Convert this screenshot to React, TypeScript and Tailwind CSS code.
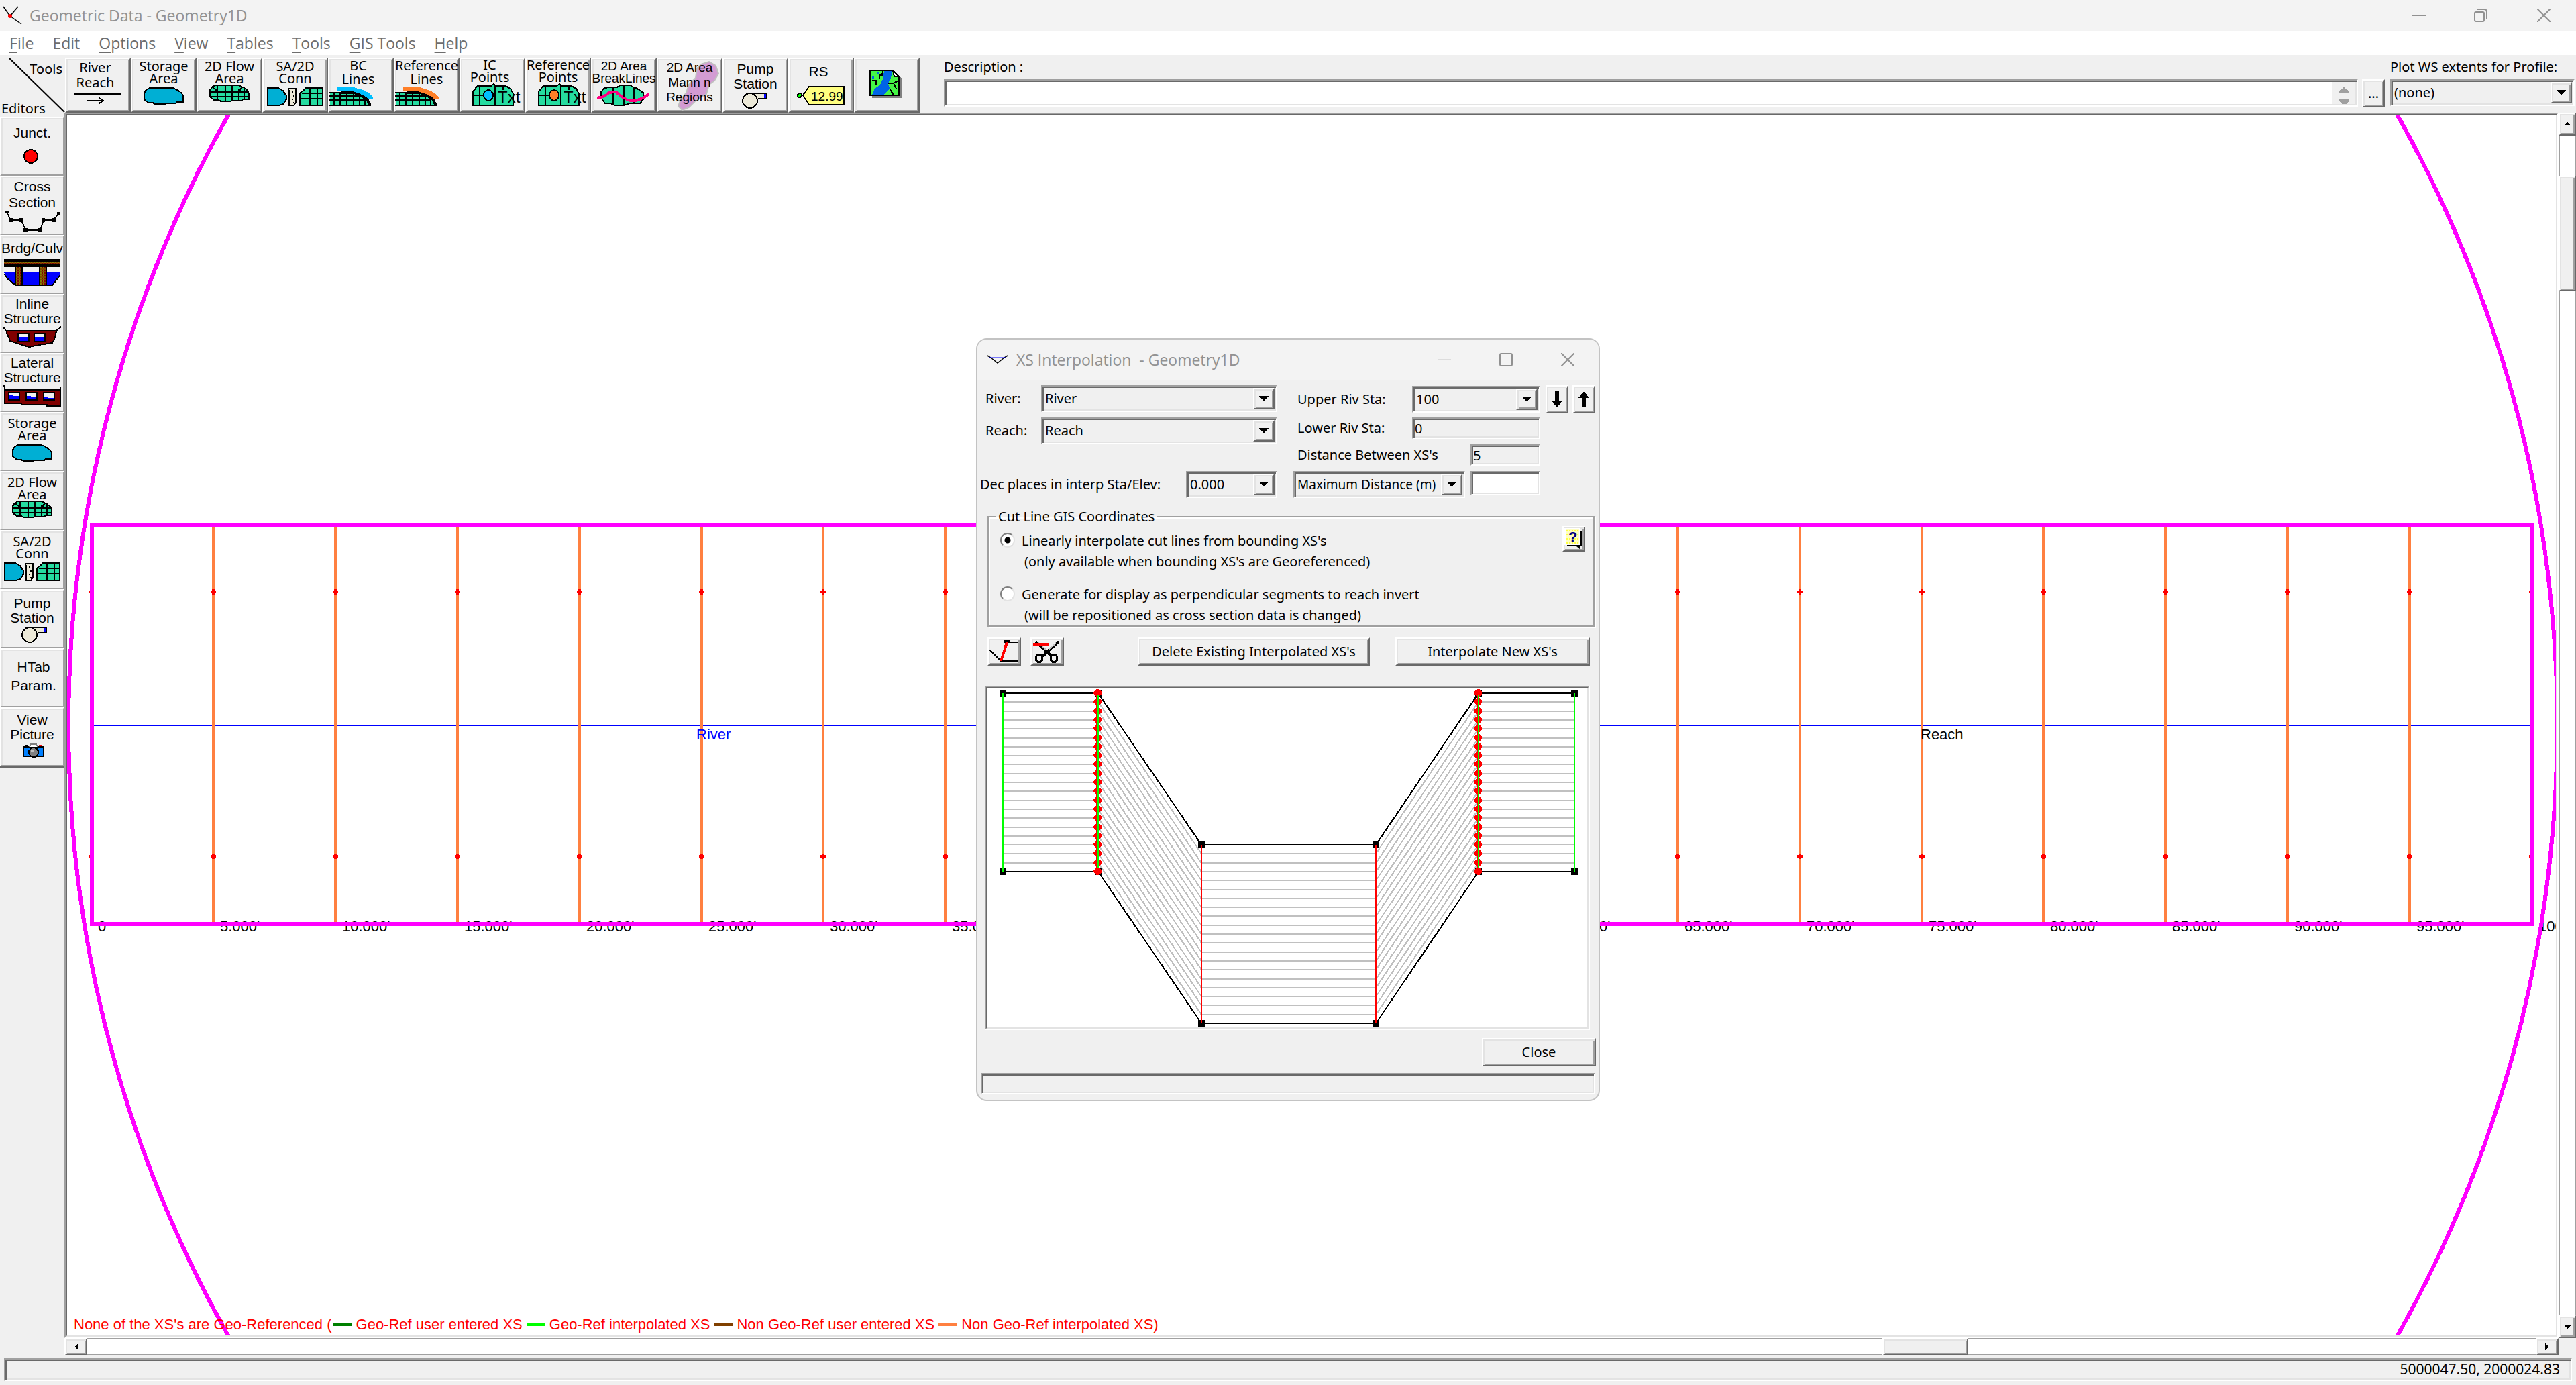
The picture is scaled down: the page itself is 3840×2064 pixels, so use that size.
import React from "react";
import { clsx } from "clsx";

const RAISED =
  "border-2 border-t-white border-l-white border-r-[#696969] border-b-[#696969] bg-[#f0f0f0] shadow-[inset_2px_2px_0_#e3e3e3,inset_-2px_-2px_0_#a0a0a0]";
const SUNKEN =
  "border-2 border-t-[#a0a0a0] border-l-[#a0a0a0] border-r-white border-b-white shadow-[inset_2px_2px_0_#696969,inset_-2px_-2px_0_#e3e3e3]";
const SUNKEN_OUTER = "border-2 border-t-[#a0a0a0] border-l-[#a0a0a0] border-r-white border-b-white";
const SUNKEN_INNER = "border-2 border-t-[#696969] border-l-[#696969] border-r-[#e3e3e3] border-b-[#e3e3e3]";

const NOTO = "font-['Noto_Sans',sans-serif]";
const TAHOMA = "font-['Noto_Sans',sans-serif] text-[20px]";
const SANS = "font-['Liberation_Sans',sans-serif] text-[21px]";

const MESH = "#25dca0";
const WATER = "#00afd4";

type IconProps = { w: number; h: number; className?: string; children: React.ReactNode };
function Icon({ w, h, className, children }: IconProps) {
  return (
    <svg width={w} height={h} viewBox={`0 0 ${w} ${h}`} shapeRendering="crispEdges" className={clsx("block shrink-0", className)} aria-hidden="true">
      {children}
    </svg>
  );
}

const BLOB = "M9 1H44L52 5L57 9L59 13V22L50 22L48 24H34L31 25H17L14 23H7L1 18V8L5 3Z";

const StorageIcon = () => (
  <Icon w={60} h={27}>
    <path d={BLOB} fill={WATER} stroke="#000" strokeWidth="2" />
  </Icon>
);

const FlowAreaIcon = () => (
  <Icon w={60} h={27}>
    <path d={BLOB} fill={MESH} stroke="#000" strokeWidth="2" />
    <path d="M12 2V24M24 1V25M34 1V25M44 6V24M52 6V22M1 11H59M1 18H59M5 4L12 10M50 3L43 11" fill="none" stroke="#000" strokeWidth="2" />
  </Icon>
);

const ConnIcon = () => (
  <Icon w={84} h={28}>
    <path d="M1 1H17L24 5L29 13V18L24 25L19 27H1Z" fill={WATER} stroke="#000" strokeWidth="2" />
    <path d="M32 4V2H43V22L40 27H33V5Z" fill="#ece9d8" stroke="#000" strokeWidth="2" />
    <path d="M37 6h2v2h-2zM39 12h2v2h-2zM37 17h2v2h-2zM39 22h2v2h-2z" fill="#000" />
    <path d="M58 1H83V27H49V9Z" fill={MESH} stroke="#000" strokeWidth="2" />
    <path d="M64 1V27M75 1V27M52 9H83M49 17H83" stroke="#000" strokeWidth="2" />
  </Icon>
);

const LinesIcon = ({ color }: { color: string }) => (
  <Icon w={66} h={28}>
    <path d="M1 7H38L48 11L56 17L61 27H1Z" fill={MESH} />
    <path d="M0 8H20M0 13H44M0 19H54M0 27H62M7 7V27M16 9V27M26 9V27M36 9V27M45 12V27M53 16V27" stroke="#000" strokeWidth="2" fill="none" />
    <path d="M18 8H37L47 12L56 18L61 27" stroke="#000" strokeWidth="4" fill="none" />
    <path d="M12 0H36L50 4L60 9L65 15V18H58L54 14L44 9L34 6H12Z" fill={color} />
  </Icon>
);

const PointsIcon = ({ color }: { color: string }) => (
  <Icon w={76} h={34}>
    <path d="M1 33V12L8 4H28L32 1L36 4H50L57 8L61 16V33Z" fill={MESH} stroke="#000" strokeWidth="2" />
    <path d="M11 4V33M34 2V33M1 18H16M46 4V10" stroke="#000" strokeWidth="2" />
    <ellipse cx="24" cy="18" rx="7" ry="8" fill={color} stroke="#000" strokeWidth="2" />
    <text x="38" y="29" fontSize="24" className="font-['Liberation_Sans',sans-serif]">Txt</text>
  </Icon>
);

const BreakIcon = () => (
  <Icon w={80} h={32}>
    <path d="M16 4H30L34 1H50L54 4L60 6L69 12V22L64 28H48L40 31H26L20 28H12L6 20V11L10 6Z" fill={MESH} stroke="#000" strokeWidth="2" />
    <path d="M24 4V29M40 2V30M55 5V28" stroke="#000" strokeWidth="2" />
    <path d="M0 20L10 18L18 12L28 11L38 19L48 24H58L68 20L78 14" stroke="#ff0080" strokeWidth="4" fill="none" />
  </Icon>
);

const PumpIcon = () => (
  <Icon w={40} h={24}>
    <path d="M12 1H37V9H24" fill="#ece9d8" stroke="#000" strokeWidth="2" />
    <rect x="33" y="2" width="3" height="6" fill="#0000ff" />
    <circle cx="12" cy="12" r="11" fill="#ece9d8" stroke="#000" strokeWidth="2" />
  </Icon>
);

const RiverReachIcon = () => (
  <Icon w={70} h={20}>
    <rect x="0" y="2" width="70" height="4" />
    <path d="M18 14H44M36 9L42 14L36 19" stroke="#000" strokeWidth="2" fill="none" />
  </Icon>
);

const TagIcon = () => (
  <Icon w={72} h={30}>
    <path d="M9 14L18 1H70V28H18Z" fill="#ffff80" stroke="#000" strokeWidth="2" />
    <circle cx="4" cy="14" r="3" fill="#00ff00" stroke="#000" strokeWidth="2" />
    <text x="21" y="22" fontSize="19" className="font-['Liberation_Sans',sans-serif]">12.99</text>
  </Icon>
);

const MapIcon = () => (
  <Icon w={48} h={42}>
    <path d="M4 4H36L48 12V42H4Z" fill="#808080" />
    <path d="M1 1H35L44 10V38H1Z" fill="#45f545" stroke="#000" strokeWidth="2" />
    <path d="M22 2H34L32 12L28 20L30 28L22 37H4L8 28L16 22L20 14Z" fill="#0064e6" />
    <path d="M35 1L44 10H37Z" fill="#fff" stroke="#000" strokeWidth="2" />
    <path d="M20 2L19 8H15V14M28 20H36L43 16M36 20L40 28M30 28L36 37M4 16H10V22" fill="none" stroke="#000" strokeWidth="2" />
    <path d="M12 4h3v3h-3zM4 10h3v3h-3z" fill="#0064e6" />
  </Icon>
);

const JunctionIcon = () => (
  <Icon w={22} h={22}>
    <circle cx="11" cy="11" r="10" fill="#f00" stroke="#000" strokeWidth="2" />
  </Icon>
);

const CrossSectionIcon = () => (
  <Icon w={82} h={32}>
    <path d="M3 2L9 14H25L31 29H53L58 14H73L80 4" fill="none" stroke="#000" strokeWidth="2" />
    <path d="M0 0h6v4H0zM6 11h6v6H6zM22 11h6v6h-6zM28 26h6v6h-6zM50 26h6v6h-6zM55 11h5v6h-5zM70 11h6v6h-6zM78 2h4v4h-4z" />
  </Icon>
);

const BridgeIcon = () => (
  <Icon w={84} h={40}>
    <path d="M0 20H84V24L72 38H17L4 28Z" fill="#0000ff" />
    <path d="M0 22L6 30L17 39H72L84 24" fill="none" stroke="#000" strokeWidth="2" />
    <rect x="0" y="0" width="84" height="12" />
    <rect x="0" y="4" width="84" height="4" fill="#804000" />
    <rect x="16" y="12" width="12" height="26" />
    <rect x="18" y="12" width="8" height="26" fill="#804a00" />
    <rect x="52" y="12" width="12" height="26" />
    <rect x="54" y="12" width="8" height="26" fill="#804a00" />
    <path d="M0 5H84M19 12V38M23 12V38M55 12V38M59 12V38" stroke="#808000" strokeWidth="2" strokeDasharray="2 2" />
    <path d="M0 7H84M21 12V38M25 12V38M57 12V38M61 12V38" stroke="#800000" strokeWidth="2" strokeDasharray="2 2" />
  </Icon>
);

const InlineIcon = () => (
  <Icon w={88} h={32}>
    <path d="M1 1L5 7H80L87 1" fill="none" stroke="#000" strokeWidth="2" />
    <path d="M5 7H80L78 17L74 25L54 28L40 31L22 26L11 22Z" fill="#800000" stroke="#000" strokeWidth="2" />
    <path d="M23 11H39V23H23ZM47 11H63V23H47Z" fill="#f0f0f0" stroke="#000" strokeWidth="2" />
    <path d="M24 16H38V22H24ZM48 16H62V22H48Z" fill="#0000ff" />
  </Icon>
);

const LateralIcon = () => (
  <Icon w={88} h={32}>
    <path d="M0 1H3V7M86 2V8" fill="none" stroke="#000" strokeWidth="2" />
    <path d="M3 7H86V31H66V29H28V27H3Z" fill="#800000" stroke="#000" strokeWidth="2" />
    <path d="M9 11H25V22H9ZM35 11H51V22H35ZM61 11H77V22H61Z" fill="#f0f0f0" stroke="#000" strokeWidth="2" />
    <path d="M10 14H16V16H24V21H10ZM36 16H42V18H50V21H36ZM62 17H68V19H76V21H62Z" fill="#0000ff" />
  </Icon>
);

const CameraIcon = () => (
  <Icon w={32} h={22}>
    <rect x="1" y="5" width="30" height="14" fill="#0080ff" stroke="#000" strokeWidth="2" />
    <path d="M10 5L12 1H20L22 5" fill="#fff" stroke="#808080" strokeWidth="2" />
    <rect x="4" y="2" width="4" height="2" />
    <rect x="24" y="2" width="4" height="2" fill="#f00" />
    <circle cx="16" cy="13" r="7" fill="#808080" stroke="#000" strokeWidth="2" />
    <rect x="12" y="9" width="4" height="4" fill="#c0c0c0" />
  </Icon>
);

type Tool = { lines: string[]; text: string; icon?: React.ReactNode; gap?: string };

const tools: Tool[] = [
  { lines: ["River", "Reach"], text: clsx(TAHOMA, "pt-0.5 pr-2 leading-[22px]"), icon: <RiverReachIcon />, gap: "mt-0.5" },
  { lines: ["Storage", "Area"], text: clsx(TAHOMA, "pt-0.5 leading-[18px]"), icon: <StorageIcon />, gap: "mt-1" },
  { lines: ["2D Flow", "Area"], text: clsx(TAHOMA, "pt-0.5 leading-[18px]"), icon: <FlowAreaIcon /> },
  { lines: ["SA/2D", "Conn"], text: clsx(TAHOMA, "pt-0.5 leading-[18px]"), icon: <ConnIcon />, gap: "mt-1" },
  { lines: ["BC", "Lines"], text: clsx(TAHOMA, "pr-2 leading-[20px]"), icon: <LinesIcon color="#00bfff" />, gap: "mt-0.5 -ml-7" },
  { lines: ["Reference", "Lines"], text: clsx(TAHOMA, "leading-[20px]"), icon: <LinesIcon color="#ff7f27" />, gap: "mt-0.5 -ml-7" },
  { lines: ["IC", "Points"], text: clsx(TAHOMA, "pr-2 leading-[18px]"), icon: <PointsIcon color="#00bfff" />, gap: "ml-4" },
  { lines: ["Reference", "Points"], text: clsx(TAHOMA, "leading-[18px]"), icon: <PointsIcon color="#ff7f27" />, gap: "ml-4" },
  { lines: ["2D Area", "BreakLines"], text: "font-['Liberation_Sans',sans-serif] text-[19px] pt-0.5 leading-[18px]", icon: <BreakIcon /> },
  { lines: ["2D Area", "Mann n", "Regions"], text: "font-['Liberation_Sans',sans-serif] text-[19px] pt-0.5 leading-[22px] relative" },
  { lines: ["Pump", "Station"], text: clsx(SANS, "pt-1 leading-[22px]"), icon: <PumpIcon />, gap: "mt-0.5" },
  { lines: ["RS"], text: clsx(SANS, "pt-2 pr-2 leading-[22px]"), icon: <TagIcon />, gap: "mt-2.5" },
  { lines: [], text: "pt-4", icon: <MapIcon />, gap: "pr-1" },
];

const editors: Tool[] = [
  { lines: ["Junct."], text: clsx(SANS, "pt-2.5 leading-[24px]"), icon: <JunctionIcon />, gap: "mt-3 pr-1" },
  { lines: ["Cross", "Section"], text: clsx(SANS, "pt-0.5 leading-[24px]"), icon: <CrossSectionIcon /> },
  { lines: ["Brdg/Culv"], text: clsx(SANS, "pt-1.5 leading-[24px]"), icon: <BridgeIcon />, gap: "mt-1" },
  { lines: ["Inline", "Structure"], text: clsx(SANS, "pt-0.5 leading-[22px]"), icon: <InlineIcon /> },
  { lines: ["Lateral", "Structure"], text: clsx(SANS, "pt-0.5 leading-[22px]"), icon: <LateralIcon /> },
  { lines: ["Storage", "Area"], text: clsx(TAHOMA, "pt-1.5 leading-[18px]"), icon: <StorageIcon />, gap: "mt-1" },
  { lines: ["2D Flow", "Area"], text: clsx(TAHOMA, "pt-1.5 leading-[18px]"), icon: <FlowAreaIcon /> },
  { lines: ["SA/2D", "Conn"], text: clsx(TAHOMA, "pt-1.5 leading-[18px]"), icon: <ConnIcon />, gap: "mt-1" },
  { lines: ["Pump", "Station"], text: clsx(SANS, "pt-2 leading-[22px]"), icon: <PumpIcon />, gap: "mt-0.5 pl-2" },
  { lines: ["HTab", "Param."], text: clsx(SANS, "pt-3 pl-1 leading-[28px]") },
  { lines: ["View", "Picture"], text: clsx(SANS, "pt-1.5 leading-[22px]"), icon: <CameraIcon />, gap: "mt-0.5 pl-1" },
];

function ToolFace({ lines, text, icon, gap }: Tool) {
  return (
    <>
      <span className={clsx("block text-center whitespace-nowrap", text)}>
        {lines.map((l) => (
          <span key={l} className="block">{l}</span>
        ))}
      </span>
      {icon && <span className={clsx("block", gap)}>{icon}</span>}
    </>
  );
}

function Arrow({ className }: { className?: string }) {
  return (
    <svg width="14" height="8" viewBox="0 0 14 8" shapeRendering="crispEdges" className={className} aria-hidden="true">
      <path d="M0 0H14L7 8Z" />
    </svg>
  );
}

type ComboProps = { id?: string; value: string; className?: string; label?: string; compact?: boolean };
function Combo({ id, value, className, label, compact }: ComboProps) {
  return (
    <div className={clsx("relative h-10", className)}>
      <select
        id={id}
        aria-label={label}
        className={clsx(
          "h-full w-full appearance-none overflow-hidden bg-[#f0f0f0] pl-1 outline-none",
          NOTO,
          compact ? "pr-8 text-[19px]" : "pr-9 text-[20px]",
          SUNKEN,
        )}
      >
        <option>{value}</option>
      </select>
      <span className={clsx("pointer-events-none absolute top-1 right-1 bottom-1 flex w-8 items-center justify-center", RAISED)}>
        <Arrow />
      </span>
    </div>
  );
}

function MainTitleBar() {
  return (
    <header className="flex h-[46px] items-center bg-[#f3f3f3] pl-1 text-[#919191]">
      <svg width="30" height="28" viewBox="0 0 30 28" className="mr-2.5" aria-hidden="true">
        <path d="M1 1L11 15L23 1M11 15L28 27" fill="none" stroke="#000" strokeWidth="1.5" />
        <circle cx="11" cy="15" r="3" fill="#f00" />
      </svg>
      <h1 className="flex-1 font-['Open_Sans',sans-serif] text-[23px]">Geometric Data - Geometry1D</h1>
      <button aria-label="Minimize" className="flex w-[92px] justify-center">
        <svg width="20" height="20" viewBox="0 0 20 20"><path d="M0 10H20" stroke="#919191" strokeWidth="2" /></svg>
      </button>
      <button aria-label="Restore" className="flex w-[92px] justify-center">
        <svg width="20" height="20" viewBox="0 0 20 20" fill="none" stroke="#919191" strokeWidth="2">
          <rect x="1" y="5" width="14" height="14" rx="2" />
          <path d="M5 1H15Q19 1 19 5V15" />
        </svg>
      </button>
      <button aria-label="Close window" className="flex w-24 justify-center">
        <svg width="20" height="20" viewBox="0 0 20 20"><path d="M0 0L20 20M20 0L0 20" stroke="#919191" strokeWidth="2" /></svg>
      </button>
    </header>
  );
}

const menus: [string, boolean][] = [
  ["File", true], ["Edit", false], ["Options", true], ["View", true],
  ["Tables", true], ["Tools", true], ["GIS Tools", true], ["Help", true],
];

function MenuBar() {
  return (
    <nav className="flex h-9 items-center gap-7 bg-white pl-3.5 font-['Open_Sans',sans-serif] text-[23px] text-[#6d6d6d]">
      {menus.map(([m, u]) => (
        <button key={m} className="whitespace-nowrap">
          {u ? <span className="underline underline-offset-4">{m[0]}</span> : m[0]}
          {m.slice(1)}
        </button>
      ))}
    </nav>
  );
}

function Toolbar() {
  return (
    <div className={clsx("flex h-[86px] pt-1", TAHOMA)}>
      <div className="relative flex w-[97px] shrink-0 flex-col justify-between">
        <svg className="absolute inset-0 h-full w-full" viewBox="0 0 97 82" aria-hidden="true">
          <path d="M14 1L96 81" stroke="#000" strokeWidth="2" />
        </svg>
        <span className="relative pt-1 pr-1 text-right leading-[26px]">Tools</span>
        <span className="relative pl-0.5 leading-3">Editors</span>
      </div>
      {tools.map((t, i) => (
        <button key={i} aria-label={t.lines.join(" ") || "Background map"} className={clsx("relative flex w-[98px] shrink-0 flex-col items-center", RAISED)}>
          {t.lines[1] === "Mann n" && (
            <svg className="absolute inset-0 h-full w-full" viewBox="0 0 94 78" aria-hidden="true">
              <path d="M64 8L76 4L86 10L90 22L84 32L76 38L72 52L58 60L46 72L36 76L30 70L34 60L42 50L46 38L56 28L58 14Z" fill="#d39bd3" stroke="#c0c0c0" strokeWidth="2" />
            </svg>
          )}
          <ToolFace {...t} />
        </button>
      ))}
      <div className="ml-9 flex min-w-0 flex-1 flex-col">
        <label htmlFor="description" className="h-8 leading-7">Description :</label>
        <div className={clsx("flex h-[41px] bg-white p-0.5", SUNKEN)}>
          <input id="description" className="min-w-0 flex-1 bg-transparent px-1 outline-none" />
          <div className="flex w-[34px] flex-col items-center justify-between bg-[#f0f0f0] pt-2">
            <Icon w={16} h={8}><path d="M8 0L16 6V8H0V6Z" fill="#a0a0a0" /></Icon>
            <Icon w={16} h={8}><path d="M0 0H16V3L11 8H5L0 3Z" fill="#a0a0a0" /></Icon>
          </div>
        </div>
      </div>
      <button aria-label="Edit description" className={clsx("mr-2 ml-1.5 mt-8 h-[42px] w-[34px] leading-[30px]", RAISED)}>...</button>
      <div className="mr-0.5 flex w-[275px] shrink-0 flex-col">
        <label htmlFor="profile" className="h-8 leading-7 whitespace-nowrap">Plot WS extents for Profile:</label>
        <Combo id="profile" value="(none)" />
      </div>
    </div>
  );
}

function EditorsBar() {
  return (
    <aside className="w-24 shrink-0 pt-1.5">
      {editors.map((t) => (
        <button
          key={t.lines.join(" ")}
          className="flex h-[88px] w-full flex-col items-center overflow-hidden border-2 border-t-white border-r-[#a0a0a0] border-b-[#a0a0a0] border-l-white bg-[#f0f0f0] shadow-[inset_2px_2px_0_#e3e3e3]"
        >
          <ToolFace {...t} />
        </button>
      ))}
      <div className="h-0.5 bg-[#696969]" />
    </aside>
  );
}

const stations = Array.from({ length: 21 }, (_, i) => ({
  x: Math.round(136 + i * 181.9),
  label: i === 0 ? "0" : `${i * 5}.000'`,
}));

const legend: [string, string][] = [
  ["bg-[#008000]", "Geo-Ref user entered XS"],
  ["bg-[#00ff00]", "Geo-Ref interpolated XS"],
  ["bg-[#804000]", "Non Geo-Ref user entered XS"],
  ["bg-[#ff8040]", "Non Geo-Ref interpolated XS)"],
];

function Schematic() {
  return (
    <div className={clsx("min-h-0 flex-1", SUNKEN_OUTER)}>
      <div className={clsx("relative h-full overflow-hidden bg-white", SUNKEN_INNER)}>
        <svg className="absolute inset-0 h-full w-full" viewBox="100 172 3710 1818" preserveAspectRatio="xMidYMid slice" shapeRendering="crispEdges" role="img" aria-label="River schematic">
          <path d="M137 1081H3775" stroke="#0000ff" strokeWidth="2" />
          {stations.map((s) => (
            <g key={s.x}>
              <path d={`M${s.x} 783V1377`} stroke="#ff8040" strokeWidth="4" />
              <path d={`M${s.x - 4} 882h8M${s.x - 4} 1276h8`} stroke="#f00" strokeWidth="4" />
              <path d={`M${s.x} 878v8M${s.x} 1272v8`} stroke="#f00" strokeWidth="4" />
              <text x={s.x + 10} y="1388" fontSize="22" className="font-['Liberation_Sans',sans-serif]">{s.label}</text>
            </g>
          ))}
          <text x="1038" y="1102" fontSize="22" fill="#0000ff" className="font-['Liberation_Sans',sans-serif]">River</text>
          <text x="2863" y="1102" fontSize="22" className="font-['Liberation_Sans',sans-serif]">Reach</text>
          <rect x="137" y="783" width="3638" height="594" fill="none" stroke="#ff00ff" strokeWidth="6" />
          <circle cx="1957" cy="1081" r="1855" fill="none" stroke="#ff00ff" strokeWidth="6" />
        </svg>
        <div className="absolute bottom-0.5 left-2.5 flex items-center text-[22px] leading-7 whitespace-nowrap text-[#f00] font-['Liberation_Sans',sans-serif]">
          <span>None of the XS's are Geo-Referenced (</span>
          {legend.map(([c, t]) => (
            <React.Fragment key={t}>
              <span className={clsx("mx-0.5 h-1 w-7", c)} />
              <span className="mx-1">{t}</span>
            </React.Fragment>
          ))}
        </div>
      </div>
    </div>
  );
}

function ScrollButton({ d, label, className }: { d: string; label: string; className: string }) {
  return (
    <button aria-label={label} className={clsx("flex shrink-0 items-center justify-center", RAISED, className)}>
      <Icon w={10} h={10}><path d={d} /></Icon>
    </button>
  );
}

function Workspace() {
  return (
    <div className="flex min-h-0 flex-1">
      <EditorsBar />
      <div className="flex min-w-0 flex-1 flex-col">
        <Schematic />
        <div className="flex h-[26px] border-y-2 border-[#a0a0a0] bg-white">
          <ScrollButton d="M8 0V10L3 5Z" label="Scroll left" className="-my-0.5 w-[34px]" />
          <div className="flex-1 grow-[2675]" />
          <div className={clsx("-my-0.5 w-32", RAISED)} />
          <div className="flex-1 grow-[846]" />
          <ScrollButton d="M2 0V10L7 5Z" label="Scroll right" className="-my-0.5 w-[34px]" />
        </div>
      </div>
      <div className="mb-[26px] flex w-[26px] shrink-0 flex-col border-x-2 border-[#a0a0a0] bg-white">
        <ScrollButton d="M5 2L10 7H0Z" label="Scroll up" className="-mx-0.5 h-[34px]" />
        <div className="h-[60px]" />
        <div className={clsx("-mx-0.5 h-[172px]", RAISED)} />
        <div className="flex-1" />
        <ScrollButton d="M5 8L10 3H0Z" label="Scroll down" className="-mx-0.5 h-[34px]" />
      </div>
    </div>
  );
}

const X = [1495, 1637, 1791, 2051, 2204, 2347];
const TOP = [1033, 1033, 1259, 1259, 1033, 1033];
const SPAN = 266;
const steps = Array.from({ length: 21 }, (_, i) => Math.round((i * SPAN) / 20));

function SectionPlot() {
  return (
    <svg className="block h-full w-full" viewBox="1472 1026 894 505" shapeRendering="crispEdges" role="img" aria-label="Interpolated cross sections">
      {steps.slice(1, -1).map((dy) => (
        <polyline key={dy} points={X.map((x, i) => `${x},${TOP[i] + dy}`).join(" ")} fill="none" stroke="#c0c0c0" strokeWidth="2" />
      ))}
      {[0, SPAN].map((dy) => (
        <g key={dy}>
          <polyline points={X.map((x, i) => `${x},${TOP[i] + dy}`).join(" ")} fill="none" stroke="#000" strokeWidth="2" />
          {X.map((x, i) => (
            <rect key={x} x={x - 5} y={TOP[i] + dy - 5} width="10" height="10" />
          ))}
        </g>
      ))}
      {[X[2], X[3]].map((x) => (
        <path key={x} d={`M${x} 1259v${SPAN}`} stroke="#f00" strokeWidth="2" />
      ))}
      {[X[1], X[4]].map((x) => (
        <g key={x}>
          <path d={`M${x - 1} 1027V1304`} stroke="#f00" strokeWidth="4" />
          {steps.map((dy) => (
            <path key={dy} d={`M${x - 3} ${1027 + dy}h4l4 4v3l-4 4h-4l-4 -4v-3z`} fill="#f00" />
          ))}
          <path d={`M${x} 1035v${SPAN - 8}`} stroke="#00ff00" strokeWidth="2" />
        </g>
      ))}
      {[X[0], X[5]].map((x) => (
        <path key={x} d={`M${x} 1033v${SPAN}`} stroke="#00ff00" strokeWidth="2" />
      ))}
    </svg>
  );
}

function InterpolationDialog() {
  return (
    <section
      role="dialog"
      aria-label="XS Interpolation"
      className={clsx("absolute top-[504px] left-1/2 flex w-[930px] -translate-x-1/2 flex-col overflow-hidden rounded-2xl border-2 border-[#c3c3c3] bg-[#f0f0f0]", TAHOMA)}
    >
      <div className="flex h-[60px] items-center bg-[#f3f3f3] pl-3.5 text-[#919191]">
        <svg width="32" height="14" viewBox="0 0 32 14" className="mr-3" aria-hidden="true">
          <path d="M1 1L6 4L16 12L26 4L31 1" fill="none" stroke="#000" strokeWidth="1.5" />
          <path d="M4 4H28" stroke="#0000ff" strokeWidth="1" />
        </svg>
        <h2 className="flex-1 font-['Open_Sans',sans-serif] text-[23px] whitespace-pre">XS Interpolation  - Geometry1D</h2>
        <button aria-label="Minimize dialog" className="flex w-[92px] justify-center">
          <svg width="20" height="20" viewBox="0 0 20 20"><path d="M0 10H20" stroke="#dcdcdc" strokeWidth="2" /></svg>
        </button>
        <button aria-label="Maximize dialog" className="flex w-[92px] justify-center">
          <svg width="20" height="20" viewBox="0 0 20 20"><rect x="1" y="1" width="18" height="18" rx="2" fill="none" stroke="#919191" strokeWidth="2" /></svg>
        </button>
        <button aria-label="Close dialog" className="flex w-[92px] justify-center">
          <svg width="20" height="20" viewBox="0 0 20 20"><path d="M0 0L20 20M20 0L0 20" stroke="#919191" strokeWidth="2" /></svg>
        </button>
      </div>

      <div className="mt-2 flex">
        <div className="w-[447px]">
          <div className="flex items-center pl-3">
            <label htmlFor="river" className="w-[83px]">River:</label>
            <Combo id="river" value="River" className="flex-1" />
          </div>
          <div className="mt-2 flex items-center pl-3">
            <label htmlFor="reach" className="w-[83px]">Reach:</label>
            <Combo id="reach" value="Reach" className="flex-1" />
          </div>
          <div className="mt-10 flex items-center pl-1">
            <label htmlFor="decimals" className="flex-1 whitespace-nowrap">Dec places in interp Sta/Elev:</label>
            <Combo id="decimals" value="0.000" className="w-[136px]" />
          </div>
        </div>
        <div className="ml-6">
          <div className="flex items-center">
            <label htmlFor="upper" className="w-[177px] pl-1.5">Upper Riv Sta:</label>
            <Combo id="upper" value="100" className="w-[191px]" />
            <button aria-label="Next station" className={clsx("ml-2 flex h-[42px] w-[34px] items-center justify-center", RAISED)}>
              <Icon w={16} h={24}><path d="M5 0H11V14H16L8 24L0 14H5Z" /></Icon>
            </button>
            <button aria-label="Previous station" className={clsx("ml-1.5 flex h-[42px] w-[34px] items-center justify-center", RAISED)}>
              <Icon w={16} h={24}><path d="M5 24H11V10H16L8 0L0 10H5Z" /></Icon>
            </button>
          </div>
          <div className="mt-1.5 flex items-center">
            <label htmlFor="lower" className="w-[177px] pl-1.5">Lower Riv Sta:</label>
            <input id="lower" readOnly defaultValue="0" className={clsx("h-8 w-[191px] bg-[#f0f0f0] pl-0.5 outline-none", SUNKEN)} />
          </div>
          <div className="mt-2 flex items-center">
            <label htmlFor="distance" className="w-[264px] pl-1.5">Distance Between XS's</label>
            <input id="distance" readOnly defaultValue="5" className={clsx("h-8 w-[104px] bg-[#f0f0f0] pl-0.5 outline-none", SUNKEN)} />
          </div>
          <div className="mt-2 flex items-start">
            <Combo label="Spacing rule" value="Maximum Distance (m)" compact className="w-[256px]" />
            <input aria-label="Spacing value" className={clsx("ml-2 h-9 w-[104px] bg-white px-1 outline-none", SUNKEN)} />
          </div>
        </div>
      </div>

      <fieldset className="mt-3.5 mr-1.5 ml-[15px] flex border-2 border-[#a0a0a0] shadow-[2px_2px_0_#fff,inset_2px_2px_0_#fff]">
        <legend className="ml-2.5 px-1 leading-7">Cut Line GIS Coordinates</legend>
        <div className="flex flex-1 flex-col gap-[18px] pt-1.5 pl-[17px] leading-[31px]">
          {[
            ["Linearly interpolate cut lines from bounding XS's", "(only available when bounding XS's are Georeferenced)"],
            ["Generate for display as perpendicular segments to reach invert", "(will be repositioned as cross section data is changed)"],
          ].map(([a, b], i) => (
            <label key={a} className="flex">
              <input
                type="radio"
                name="cutline"
                defaultChecked={i === 0}
                className="mt-1 mr-2.5 size-[22px] shrink-0 appearance-none rounded-full border-2 border-t-[#808080] border-r-[#e3e3e3] border-b-[#e3e3e3] border-l-[#808080] bg-white checked:bg-[radial-gradient(circle,#000_0_4px,#fff_5px)]"
              />
              <span>
                <span className="block">{a}</span>
                <span className="block pl-1">{b}</span>
              </span>
            </label>
          ))}
        </div>
        <button aria-label="Help" className={clsx("mr-3 flex h-[38px] w-[34px] items-center justify-center", RAISED)}>
          <svg width="28" height="32" viewBox="0 0 28 32" aria-hidden="true">
            <path d="M4 4H26V26H24V32L18 27H4Z" fill="#000" />
            <path d="M1 1H23V24H1Z" fill="#ffffc0" stroke="#fff" strokeWidth="2" />
            <path d="M3 4H22M3 10H22M3 16H22M3 22H22" stroke="#ffff40" strokeWidth="2" strokeDasharray="2 2" />
            <text x="6" y="21" fontSize="22" fontWeight="700" fill="#000080" className="font-['Liberation_Sans',sans-serif]">?</text>
          </svg>
        </button>
      </fieldset>

      <div className="mt-4 flex h-[42px] pl-[15px]">
        <button aria-label="Draw chord" className={clsx("flex w-[50px] items-center justify-center", RAISED)}>
          <Icon w={44} h={34}>
            <path d="M1 15L17 31H42M26 3H42" fill="none" stroke="#000" strokeWidth="2" />
            <path d="M22 0h8v4h-8z" />
            <path d="M17 31L26 3" stroke="#f00" strokeWidth="4" />
          </Icon>
        </button>
        <button aria-label="Cut chord" className={clsx("ml-3.5 flex w-[50px] items-center justify-center", RAISED)}>
          <Icon w={42} h={34}>
            <path d="M4 2L28 24M38 2L14 24" stroke="#000" strokeWidth="4" />
            <path d="M8 4L20 15M34 4L24 13" stroke="#c0c0c0" strokeWidth="2" />
            <ellipse cx="9" cy="27" rx="5" ry="6" fill="none" stroke="#000" strokeWidth="3" />
            <ellipse cx="31" cy="27" rx="5" ry="6" fill="none" stroke="#000" strokeWidth="3" />
            <path d="M0 6H24" stroke="#f00" strokeWidth="4" />
          </Icon>
        </button>
        <button className={clsx("ml-[110px] w-[346px]", RAISED)}>Delete Existing Interpolated XS's</button>
        <button className={clsx("ml-[38px] w-[290px]", RAISED)}>Interpolate New XS's</button>
      </div>

      <div className={clsx("mt-[30px] mr-[13px] ml-[11px] h-[513px]", SUNKEN_OUTER)}>
        <div className={clsx("h-full bg-white", SUNKEN_INNER)}>
          <SectionPlot />
        </div>
      </div>

      <button className={clsx("mt-3 mr-1 h-[42px] w-[170px] self-end", RAISED)}>Close</button>
      <div className={clsx("mx-[5px] mt-2.5 mb-2 h-8", SUNKEN)} />
    </section>
  );
}

export default function App() {
  return (
    <div className="relative flex h-screen flex-col overflow-hidden bg-[#f0f0f0] text-black">
      <MainTitleBar />
      <MenuBar />
      <Toolbar />
      <Workspace />
      <footer className={clsx("mx-1.5 mt-1 mb-1.5 flex h-[34px] shrink-0 items-center justify-end pr-4 text-[21px]", NOTO, SUNKEN)}>5000047.50, 2000024.83</footer>
      <InterpolationDialog />
    </div>
  );
}
